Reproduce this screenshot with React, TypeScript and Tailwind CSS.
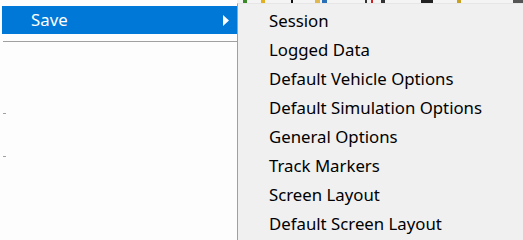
export default function App() {
  const items = [
    "Session",
    "Logged Data",
    "Default Vehicle Options",
    "Default Simulation Options",
    "General Options",
    "Track Markers",
    "Screen Layout",
    "Default Screen Layout",
  ];

  return (
    <div className="flex h-[240px] w-[523px] overflow-hidden bg-[#fdfdfd] font-['Noto_Sans',sans-serif] text-[16.8px]">
      {/* Parent menu */}
      <div className="flex w-[237px] shrink-0 flex-col">
        <div className="h-[6px]" />
        <div className="ml-[2px] flex h-[28px] items-center justify-between bg-[#0078d7] pl-[29px] pr-[8px] text-white">
          <span>Save</span>
          <svg width="6" height="11" viewBox="0 0 6 11">
            <path d="M0 0 L6 5.5 L0 11 Z" fill="#fff" />
          </svg>
        </div>
        <div className="ml-[3px] mt-[7px] h-[1px] bg-[#a0a0a0]" />
        <div className="ml-[3px] mt-[71px] h-[1px] w-[3px] bg-[#a0a0a0]" />
        <div className="ml-[3px] mt-[42px] h-[1px] w-[3px] bg-[#a0a0a0]" />
      </div>

      {/* Submenu */}
      <div className="flex flex-1 flex-col">
        <div className="flex h-[3px] items-end gap-[2px] overflow-hidden bg-[#f4f4f4]">
          <span className="ml-[6px] h-[3px] w-[4px] bg-[#3a8a2a]" />
          <span className="ml-[12px] h-[3px] w-[4px] bg-[#e0b020]" />
          <span className="ml-[24px] h-[3px] w-[2px] bg-[#111]" />
          <span className="ml-[20px] h-[3px] w-[5px] bg-[#e0b850]" />
          <span className="h-[3px] w-[5px] bg-[#2a6fb8]" />
          <span className="ml-[36px] h-[3px] w-[2px] bg-[#333]" />
          <span className="ml-[2px] h-[3px] w-[2px] bg-[#d02020]" />
          <span className="ml-[6px] h-[3px] w-[4px] bg-[#333]" />
          <span className="ml-[34px] h-[3px] w-[12px] bg-[#222]" />
          <span className="ml-[22px] h-[3px] w-[4px] bg-[#c9a020]" />
          <span className="ml-[50px] h-[3px] w-[10px] bg-[#555]" />
        </div>
        <div className="flex flex-1 flex-col border-l border-t border-l-[#a0a0a0] border-t-[#e6e6e6] bg-[#f0f0f0] pt-[2px]">
          {items.map((label) => (
            <div key={label} className="flex h-[29px] items-center pl-[31px] text-black">
              {label}
            </div>
          ))}
        </div>
      </div>
    </div>
  );
}
